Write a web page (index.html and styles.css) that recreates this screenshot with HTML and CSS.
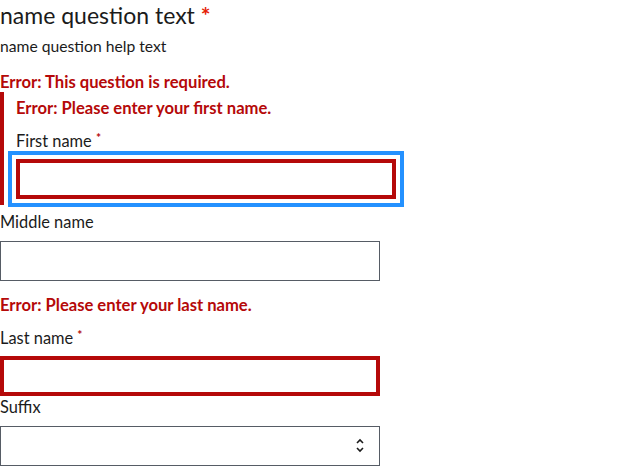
FILE: index.html
```html
<!DOCTYPE html>
<html lang="en">
<head>
<meta charset="utf-8">
<title>Name question</title>
<link rel="stylesheet" href="styles.css">
</head>
<body>
<form class="form">
  <fieldset class="group">
    <legend class="legend">name question text <span class="req-big">*</span></legend>
    <div class="help">name question help text</div>
    <div class="error top-error">Error: This question is required.</div>

    <div class="field-error">
      <div class="error">Error: Please enter your first name.</div>
      <label class="label first-label" for="first">First name <span class="req">*</span></label>
      <input class="input input-error input-focus first-input" id="first" type="text">
    </div>

    <label class="label middle-label" for="middle">Middle name</label>
    <input class="input middle-input" id="middle" type="text">

    <div class="error last-error">Error: Please enter your last name.</div>
    <label class="label last-label" for="last">Last name <span class="req">*</span></label>
    <input class="input input-error last-input" id="last" type="text">

    <label class="label suffix-label" for="suffix">Suffix</label>
    <div class="select">
      <span class="chevrons">
        <svg width="8" height="15" viewBox="0 0 8 15"><path d="M1 5 L4 2 L7 5" fill="none" stroke="#1b1b1b" stroke-width="1.6"/><path d="M1 10 L4 13 L7 10" fill="none" stroke="#1b1b1b" stroke-width="1.6"/></svg>
      </span>
    </div>
  </fieldset>
</form>
</body>
</html>
```
FILE: styles.css
```css
html, body {
  margin: 0;
  padding: 0;
  background: #ffffff;
}
body {
  font-family: "Lato", "Liberation Sans", sans-serif;
  color: #1b1b1b;
  overflow: hidden;
  height: 466px;
}
.form { margin: 0; }
.group {
  border: 0;
  margin: 0;
  padding: 0;
  min-width: 0;
  display: flex;
  flex-direction: column;
  align-items: flex-start;
}
.legend {
  padding: 0;
  font-size: 23px;
  line-height: 30px;
  height: 30px;
  float: left;
  width: 100%;
}
.req-big {
  color: #e52207;
  font-weight: 700;
}
.help {
  font-size: 15.7px;
  line-height: 20px;
  margin-top: 5.9px;
}
.error {
  color: #b50909;
  font-weight: 700;
  font-size: 16.6px;
  line-height: 20px;
}
.top-error { margin-top: 16px; }
.field-error {
  margin-top: 0;
  border-left: 4px solid #b50909;
  padding: 6px 0 6px 12px;
  display: flex;
  flex-direction: column;
  align-items: flex-start;
}
.label {
  font-size: 16.4px;
  line-height: 22px;
}
.first-label { margin-top: 12px; }
.middle-label { margin-top: 6.65px; }
.last-error { margin-top: 14.1px; }
.last-label { margin-top: 12.25px; }
.suffix-label { margin-top: 0; }
.req {
  color: #b50909;
  font-size: 12px;
  font-weight: 700;
  vertical-align: top;
  line-height: 16px;
}
.input {
  box-sizing: border-box;
  width: 380px;
  height: 40px;
  margin: 0;
  padding: 0 8px;
  border: 1px solid #565c65;
  border-radius: 0;
  background: #ffffff;
  font: inherit;
  outline: none;
}
.first-input { margin-top: 6.95px; }
.middle-input { margin-top: 7.35px; }
.last-input { margin-top: 6.65px; }
.input-error {
  border: 4px solid #b50909;
}
.input-focus {
  outline: 4px solid #2491ff;
  outline-offset: 4px;
}
.select {
  box-sizing: border-box;
  width: 380px;
  height: 40px;
  margin-top: 8px;
  border: 1px solid #565c65;
  display: flex;
  align-items: center;
  justify-content: flex-end;
  padding-right: 15px;
}
.chevrons {
  display: flex;
  width: 8px;
  height: 15px;
}
```
